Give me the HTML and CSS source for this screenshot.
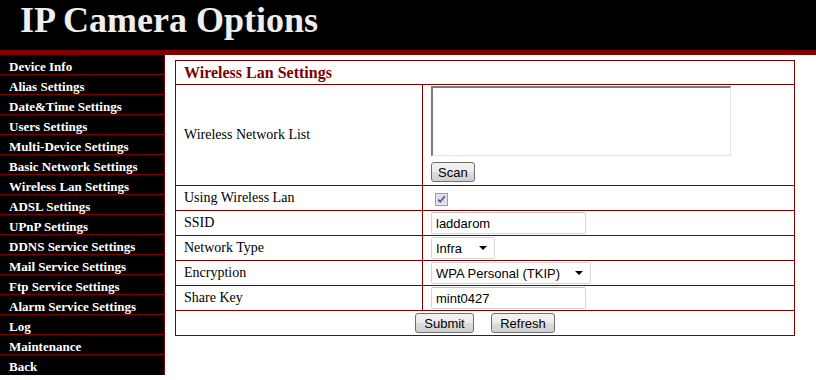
FILE: index.html
```html
<!DOCTYPE html>
<html lang="en">
<head>
    <meta charset="UTF-8">
    <title>IP Camera Options</title>
    <link rel="stylesheet" href="styles.css">
</head>
<body>
    <div class="header">
        <h1>IP Camera Options</h1>
    </div>

    <div class="page">
        <div class="menu">
            <a href="#">Device Info</a>
            <a href="#">Alias Settings</a>
            <a href="#">Date&amp;Time Settings</a>
            <a href="#">Users Settings</a>
            <a href="#">Multi-Device Settings</a>
            <a href="#">Basic Network Settings</a>
            <a href="#">Wireless Lan Settings</a>
            <a href="#">ADSL Settings</a>
            <a href="#">UPnP Settings</a>
            <a href="#">DDNS Service Settings</a>
            <a href="#">Mail Service Settings</a>
            <a href="#">Ftp Service Settings</a>
            <a href="#">Alarm Service Settings</a>
            <a href="#">Log</a>
            <a href="#">Maintenance</a>
            <a href="#">Back</a>
        </div>

        <div class="content">
            <table class="settings">
                <tr class="title-row">
                    <td colspan="2">Wireless Lan Settings</td>
                </tr>
                <tr class="list-row">
                    <td class="label">Wireless Network List</td>
                    <td class="field">
                        <textarea class="netlist"></textarea>
                        <button type="button" class="btn scan">Scan</button>
                    </td>
                </tr>
                <tr>
                    <td class="label">Using Wireless Lan</td>
                    <td class="field">
                        <span class="check">
                            <svg width="13" height="13" viewBox="0 0 13 13">
                                <rect x="0.5" y="0.5" width="12" height="12" fill="#e9e9ec" stroke="#9a9a9a"/>
                                <rect x="2" y="2" width="9" height="9" fill="#dcdce2"/>
                                <path d="M3.2 6.6 L5.2 8.8 L9.8 3.2" fill="none" stroke="#4a5a9a" stroke-width="1.6"/>
                            </svg>
                        </span>
                    </td>
                </tr>
                <tr>
                    <td class="label">SSID</td>
                    <td class="field"><input type="text" class="text" value="laddarom"></td>
                </tr>
                <tr>
                    <td class="label">Network Type</td>
                    <td class="field">
                        <span class="select small"><select><option>Infra</option><option>Adhoc</option></select></span>
                    </td>
                </tr>
                <tr>
                    <td class="label">Encryption</td>
                    <td class="field">
                        <span class="select wide"><select><option>WPA Personal (TKIP)</option></select></span>
                    </td>
                </tr>
                <tr>
                    <td class="label">Share Key</td>
                    <td class="field"><input type="text" class="text" value="mint0427"></td>
                </tr>
                <tr class="buttons-row">
                    <td colspan="2">
                        <button type="button" class="btn">Submit</button>
                        <button type="button" class="btn">Refresh</button>
                    </td>
                </tr>
            </table>
        </div>
    </div>
</body>
</html>
```

FILE: styles.css
```css
body {
    margin: 0;
    padding: 0;
    background: #fff;
    font-family: "Liberation Serif", "Times New Roman", serif;
}

.header {
    background: #000;
    height: 50px;
    border-bottom: 5px solid #800000;
}

.header h1 {
    margin: 0;
    padding-left: 20px;
    font-size: 36px;
    line-height: 41px;
    color: #eeeeee;
}

.page {
    display: flex;
    align-items: flex-start;
}

.menu {
    width: 164px;
    background: #000;
    border-right: 1px solid #800000;
    display: flex;
    flex-direction: column;
}

.menu a {
    display: block;
    height: 16px;
    padding-top: 3px;
    line-height: 18px;
    padding-left: 9px;
    border-bottom: 1px solid #800000;
    color: #fff;
    font-size: 13px;
    font-weight: bold;
    text-decoration: none;
    overflow: hidden;
}

.menu a:last-child {
    border-bottom: none;
    height: 17px;
}

.content {
    padding: 5px 0 0 10px;
}

.settings {
    width: 620px;
    border-collapse: collapse;
    border: 1px solid #800000;
    font-size: 14px;
}

.settings td {
    border: 1px solid #800000;
    padding: 0 8px;
    height: 24px;
}

.title-row td {
    height: 23px;
    color: #800000;
    font-size: 16px;
    font-weight: bold;
}

.settings td.label {
    width: 230px;
}

.list-row td {
    height: 99px;
}

.list-row td.field {
    padding-top: 1px;
    vertical-align: top;
}

.netlist {
    display: block;
    width: 297px;
    height: 67px;
    margin: 0 0 6px 0;
    padding: 0;
    resize: none;
    border-top: 2px solid #7a7a7a;
    border-left: 2px solid #7a7a7a;
    border-right: 1px solid #e3e3e3;
    border-bottom: 1px solid #e3e3e3;
    background: #fff;
}

.field {
    font-family: "Liberation Sans", Arial, sans-serif;
    font-size: 13px;
}

.check {
    display: inline-block;
    width: 13px;
    height: 13px;
    margin-left: 4px;
    vertical-align: middle;
}

.check svg {
    display: block;
}

.text {
    box-sizing: border-box;
    width: 155px;
    height: 22px;
    padding: 0 4px;
    border: 1px solid #d5d5d5;
    border-top-color: #c2c2c2;
    border-radius: 2px;
    font-family: "Liberation Sans", Arial, sans-serif;
    font-size: 13px;
    color: #000;
    vertical-align: middle;
}

.select {
    position: relative;
    display: inline-block;
    vertical-align: middle;
}

.select select {
    appearance: none;
    -webkit-appearance: none;
    box-sizing: border-box;
    height: 22px;
    padding: 0 4px;
    border: 1px solid #d5d5d5;
    border-radius: 2px;
    background: #fff;
    font-family: "Liberation Sans", Arial, sans-serif;
    font-size: 13px;
    color: #000;
}

.select.small select {
    width: 64px;
}

.select.wide select {
    width: 160px;
}

.select::after {
    content: "";
    position: absolute;
    right: 8px;
    top: 9px;
    border-left: 4px solid transparent;
    border-right: 4px solid transparent;
    border-top: 4px solid #000;
    pointer-events: none;
}

.btn {
    box-sizing: border-box;
    height: 20px;
    padding: 0 8px;
    border: 1px solid #707070;
    border-radius: 3px;
    background: linear-gradient(#f2f2f2 0%, #ebebeb 50%, #dddddd 51%, #cfcfcf 100%);
    font-family: "Liberation Sans", Arial, sans-serif;
    font-size: 13px;
    color: #000;
    cursor: pointer;
}

.btn.scan {
    padding: 0 6px;
}

.buttons-row td {
    text-align: center;
    padding: 0;
}

.buttons-row .btn + .btn {
    margin-left: 14px;
}
```
